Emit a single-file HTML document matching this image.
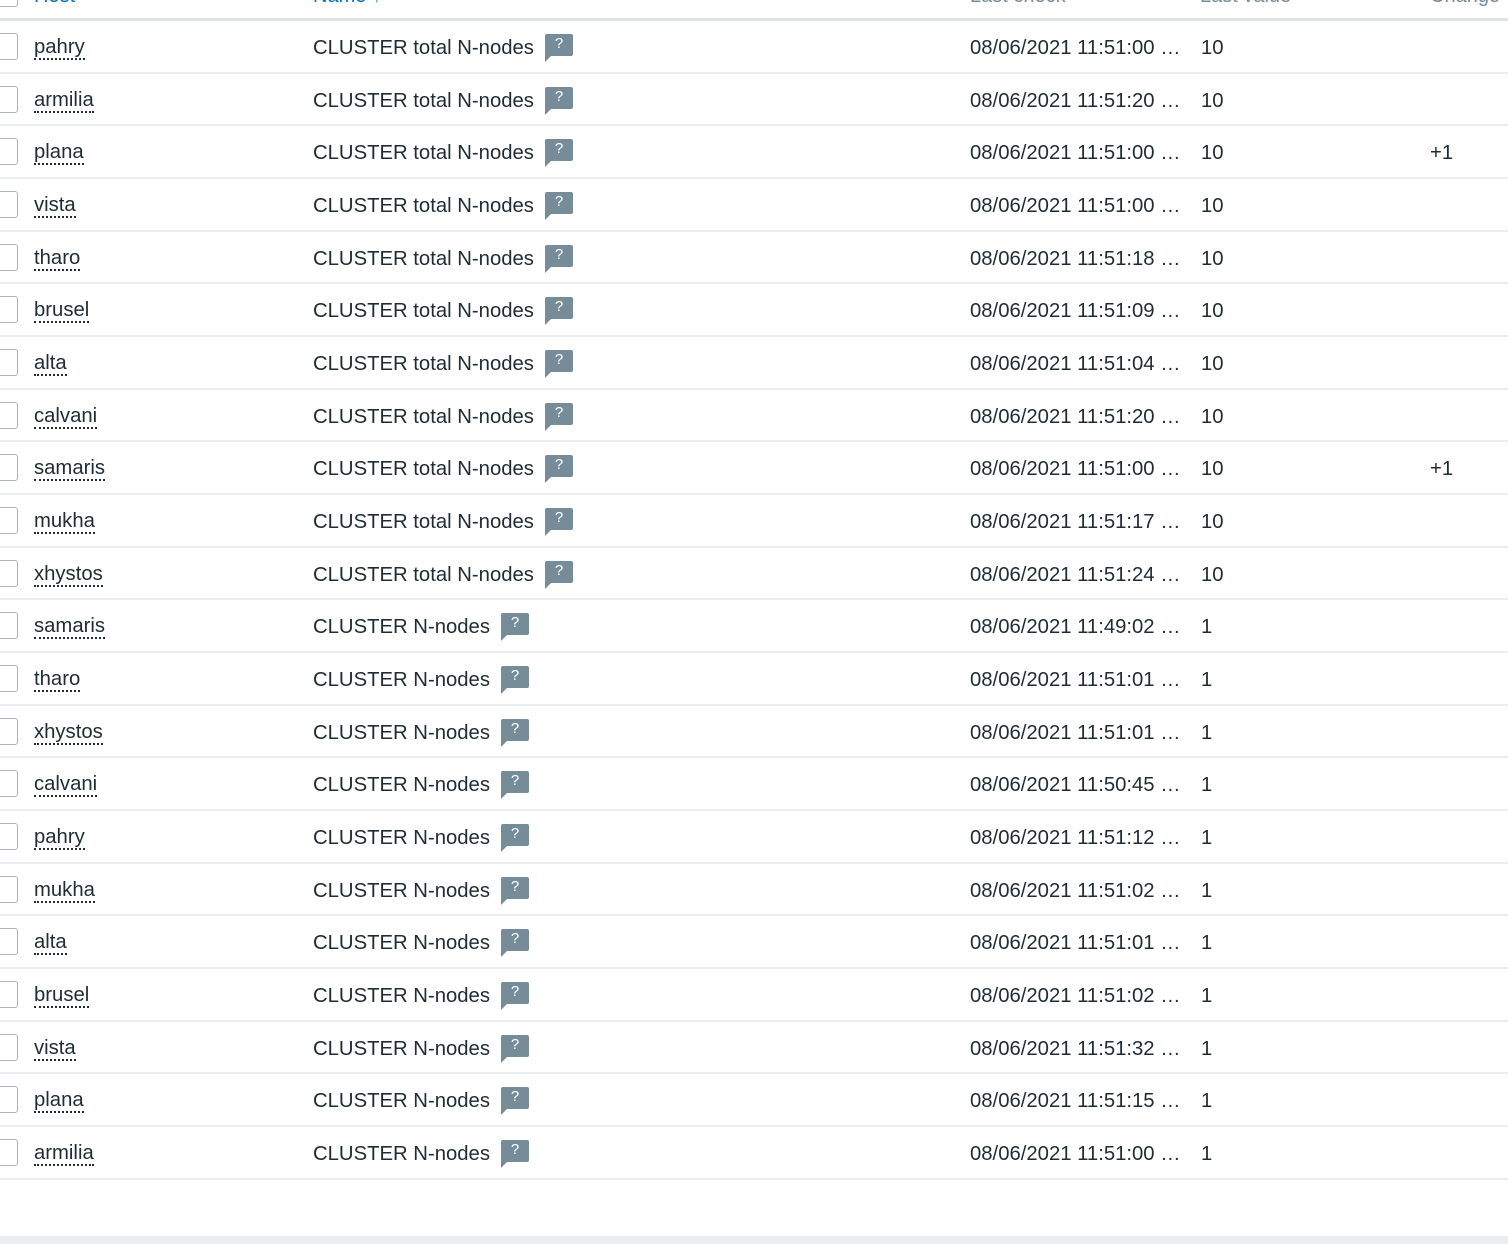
<!DOCTYPE html>
<html><head><meta charset="utf-8"><style>
*{margin:0;padding:0;box-sizing:border-box}
body{width:1508px;height:1244px;background:#fff;position:relative;overflow:hidden;font-family:"Liberation Sans",Arial,sans-serif;font-size:20.3px;color:#1f2c33}
.hd{position:absolute;top:-14px;font-size:20px;color:#768d99;line-height:20px}
.hd.b{color:#0275b8}
.hline{position:absolute;left:0;top:18px;width:1508px;height:3px;background:#dfe4e7}
.row{position:absolute;left:0;width:1508px;height:52.67px;border-bottom:2px solid #ebeef0}
.row span{position:absolute;top:15px;line-height:24px;white-space:nowrap}
.cb{position:absolute;left:-10px;top:12px;width:28px;height:27px;border:1.5px solid #aab4ba;border-radius:3px;background:#fff}
.h{left:34px;border-bottom:2px dotted #1f2c33;line-height:22px!important}
.q{position:absolute;top:13px;width:28px;height:22px;background:#768d99;border-radius:2px;color:#fff;font-size:15px;text-align:center;line-height:20px}
.q:after{content:"";position:absolute;left:0;top:21px;border-left:7px solid #768d99;border-bottom:7px solid transparent}
.band{position:absolute;left:0;top:1236px;width:1508px;height:8px;background:#ebeef0}
</style></head><body>
<div class="cb" style="top:-20px"></div>
<div class="hd b" style="left:34px">Host</div>
<div class="hd b" style="left:313px">Name ↑</div>
<div class="hd" style="left:970px">Last check</div>
<div class="hd" style="left:1200px">Last value</div>
<div class="hd" style="left:1430px">Change</div>
<div class="hline"></div>
<div id="rows"></div>
<div class="band"></div>
<script>
var d=[["pahry",1,"11:51:00","10",""],["armilia",1,"11:51:20","10",""],["plana",1,"11:51:00","10","+1"],["vista",1,"11:51:00","10",""],["tharo",1,"11:51:18","10",""],["brusel",1,"11:51:09","10",""],["alta",1,"11:51:04","10",""],["calvani",1,"11:51:20","10",""],["samaris",1,"11:51:00","10","+1"],["mukha",1,"11:51:17","10",""],["xhystos",1,"11:51:24","10",""],["samaris",0,"11:49:02","1",""],["tharo",0,"11:51:01","1",""],["xhystos",0,"11:51:01","1",""],["calvani",0,"11:50:45","1",""],["pahry",0,"11:51:12","1",""],["mukha",0,"11:51:02","1",""],["alta",0,"11:51:01","1",""],["brusel",0,"11:51:02","1",""],["vista",0,"11:51:32","1",""],["plana",0,"11:51:15","1",""],["armilia",0,"11:51:00","1",""]];
var h="";
d.forEach(function(r,i){
var t=21+i*52.67;
h+='<div class="row" style="top:'+t+'px"><div class="cb"></div><span class="h">'+r[0]+'</span><span style="left:313px">'+(r[1]?'CLUSTER total N-nodes':'CLUSTER N-nodes')+'</span><div class="q" style="left:'+(r[1]?545:501)+'px">?</div><span style="left:970px">08/06/2021 '+r[2]+' …</span><span style="left:1201px">'+r[3]+'</span><span style="left:1430px">'+r[4]+'</span></div>';
});
document.getElementById("rows").innerHTML=h;
</script>
</body></html>
